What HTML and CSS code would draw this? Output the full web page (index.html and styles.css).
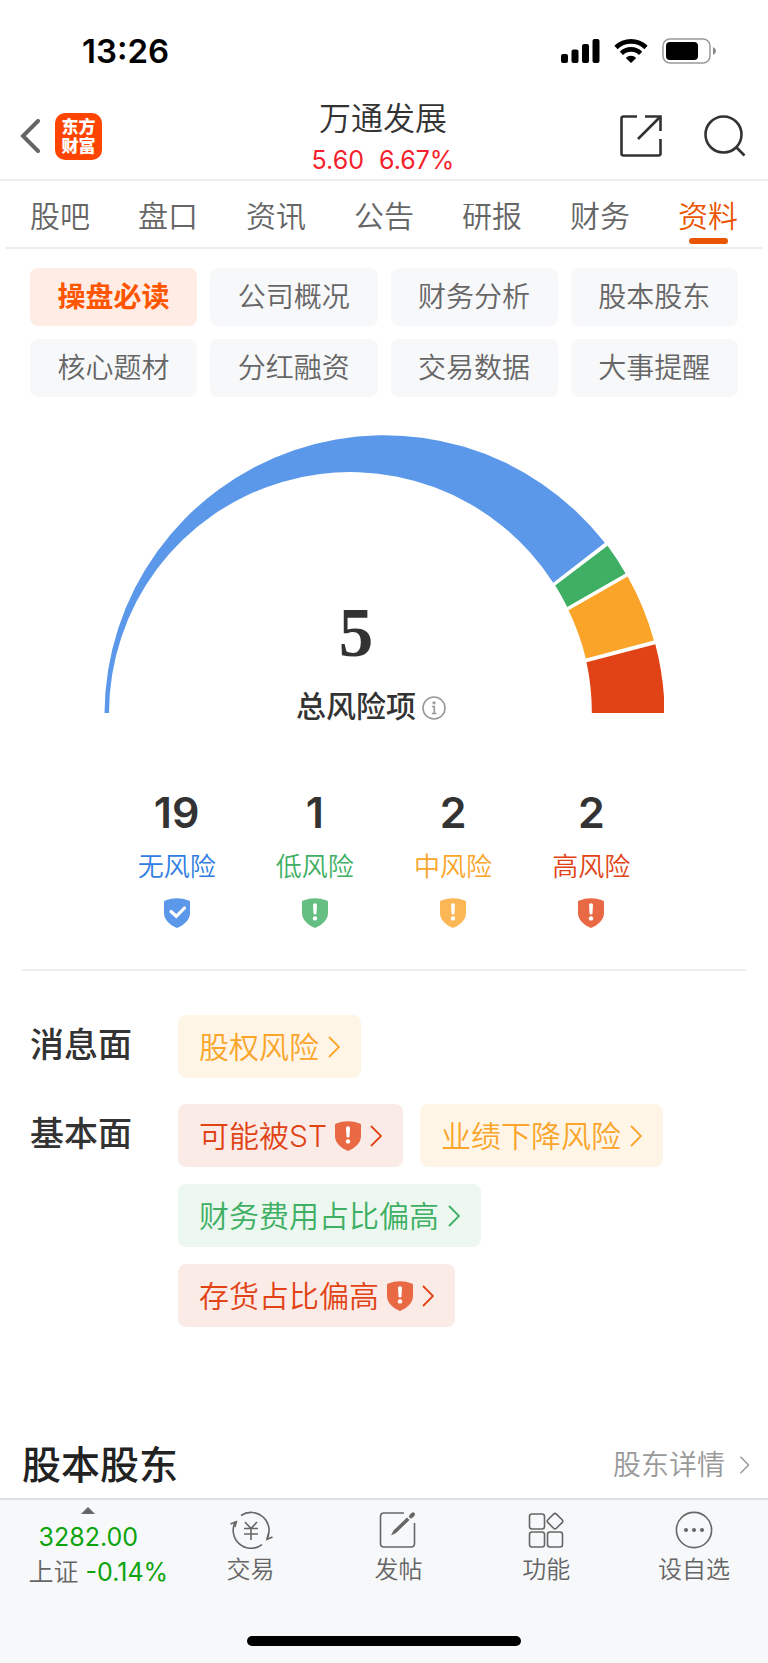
FILE: index.html
```
<!DOCTYPE html>
<html lang="zh-CN">
<head>
    <meta charset="UTF-8">
    <meta name="viewport" content="width=device-width, initial-scale=1.0">
    <title>万通发展 - 资料</title>
    <link rel="stylesheet" href="styles.css">
</head>
<body>
    <!-- Shared icons -->
    <svg class="sprite" width="0" height="0" aria-hidden="true">
        <symbol id="shield" viewBox="0 0 26 30">
            <path d="M0 4 Q0 2.8 1.2 2.4 Q13 -2 24.8 2.4 Q26 2.8 26 4 V15 C26 22 20 27 13 30 C6 27 0 22 0 15 Z" fill="currentColor"/>
        </symbol>
        <symbol id="shield-alert" viewBox="0 0 26 30">
            <use href="#shield"/>
            <path d="M11 7 Q11 5.2 13 5.2 Q15 5.2 15 7 L14.5 15.2 Q14.3 16.6 13 16.6 Q11.7 16.6 11.5 15.2 Z" fill="#fff"/>
            <circle cx="13" cy="20.4" r="2.2" fill="#fff"/>
        </symbol>
        <symbol id="shield-check" viewBox="0 0 26 30">
            <use href="#shield"/>
            <path d="M7 13.5 L12.3 18.3 L20.5 10" fill="none" stroke="#fff" stroke-width="3.2" stroke-linecap="round" stroke-linejoin="miter"/>
        </symbol>
        <symbol id="chevron" viewBox="0 0 12 22">
            <path d="M1 1 L11 11 L1 21" fill="none" stroke="currentColor" stroke-width="1.8"/>
        </symbol>
    </svg>

    <div class="status-bar">
        <time class="clock">13:26</time>
        <div class="status-icons">
            <svg width="39" height="25" viewBox="0 0 39 25" aria-hidden="true">
                <rect x="0" y="15" width="7" height="9" rx="2"/>
                <rect x="10.500" y="10.500" width="7" height="13.500" rx="2"/>
                <rect x="21" y="5" width="7" height="19" rx="2"/>
                <rect x="31.500" y="0" width="7" height="24" rx="2"/>
            </svg>
            <svg width="34" height="25" viewBox="0 0 34 25" aria-hidden="true">
                <path d="M2 8.500 A21.500 21.500 0 0 1 32 8.500" fill="none" stroke="#000" stroke-width="4.600"/>
                <path d="M7.400 14.300 A13.800 13.800 0 0 1 26.600 14.300" fill="none" stroke="#000" stroke-width="4.600"/>
                <path d="M17 24 L11.800 18.900 A7.400 7.400 0 0 1 22.200 18.900 Z"/>
            </svg>
            <svg width="54" height="26" viewBox="0 0 54 26" aria-hidden="true">
                <rect x="1" y="1" width="47" height="24" rx="7" fill="none" stroke="#999" stroke-width="1.500"/>
                <rect x="4" y="4" width="32" height="18" rx="4"/>
                <path d="M51 9 Q54 10.500 54 13 Q54 15.500 51 17 Z" fill="#888"/>
            </svg>
        </div>
    </div>

    <header class="header">
        <div class="header-left">
            <button type="button" class="icon-btn" aria-label="返回">
                <svg width="20" height="34" viewBox="0 0 20 34">
                    <path d="M18 2 L3 17 L18 32" fill="none" stroke="#666" stroke-width="4" stroke-linecap="round"/>
                </svg>
            </button>
            <a href="#" class="logo">东方<br>财富</a>
        </div>
        <div class="header-title">
            <h1>万通发展</h1>
            <p class="price"><span>5.60</span><span>6.67%</span></p>
        </div>
        <div class="header-right">
            <button type="button" class="icon-btn" aria-label="分享">
                <svg width="42" height="42" viewBox="0 0 42 42" fill="none" stroke="#333" stroke-width="2.600">
                    <path d="M17 1.500 H3.500 Q1.500 1.500 1.500 3.500 V38.500 Q1.500 40.500 3.500 40.500 H38.500 Q40.500 40.500 40.500 38.500 V24"/>
                    <path d="M25 1.500 H40.500 V16"/>
                    <path d="M40 2 L18 24"/>
                </svg>
            </button>
            <button type="button" class="icon-btn" aria-label="搜索">
                <svg width="42" height="42" viewBox="0 0 42 42" fill="none" stroke="#333" stroke-width="2.600">
                    <circle cx="19.500" cy="19.500" r="18"/>
                    <path d="M32 32 L40.500 40.500"/>
                </svg>
            </button>
        </div>
    </header>

    <nav class="tabs">
        <a href="#">股吧</a>
        <a href="#">盘口</a>
        <a href="#">资讯</a>
        <a href="#">公告</a>
        <a href="#">研报</a>
        <a href="#">财务</a>
        <a href="#" class="active">资料</a>
    </nav>

    <main>
        <div class="sections">
            <button type="button" class="active">操盘必读</button>
            <button type="button">公司概况</button>
            <button type="button">财务分析</button>
            <button type="button">股本股东</button>
            <button type="button">核心题材</button>
            <button type="button">分红融资</button>
            <button type="button">交易数据</button>
            <button type="button">大事提醒</button>
        </div>

        <div class="gauge">
            <svg viewBox="0 0 560 280" aria-hidden="true">
                <path fill="#5b98ea" d="M0.500 280 A279.500 279.500 0 0 1 500.300 109.700 L448.700 149.700 A241 241 0 0 0 5 280 Z"/>
                <path fill="#3eaf63" d="M503 112.700 A279 279 0 0 1 521 140.300 L462.700 173.700 A241 241 0 0 0 450.700 152.300 Z"/>
                <path fill="#faa52a" d="M523 143.300 A279 279 0 0 1 549.300 207.300 L481.300 225.300 A241 241 0 0 0 464 177 Z"/>
                <path fill="#e14316" d="M550.700 211 A279 279 0 0 1 560 280 H487.300 A241 241 0 0 0 482 229 Z"/>
            </svg>
            <div class="gauge-text">
                <strong class="total">5</strong>
                <div class="total-label">
                    <span>总风险项</span>
                    <button type="button" class="icon-btn info" aria-label="说明">
                        <svg width="24" height="24" viewBox="0 0 24 24">
                            <circle cx="12" cy="12" r="11" fill="none" stroke="#999" stroke-width="1.600"/>
                            <circle cx="12" cy="6.800" r="1.600" fill="#999"/>
                            <path d="M9.800 10.500 H12.300 V17.500 M9.800 17.500 H14.500" fill="none" stroke="#999" stroke-width="1.600"/>
                        </svg>
                    </button>
                </div>
            </div>
        </div>

        <ul class="counts">
            <li class="none">
                <b>19</b>
                <span>无风险</span>
                <svg width="26" height="30"><use href="#shield-check"/></svg>
            </li>
            <li class="low">
                <b>1</b>
                <span>低风险</span>
                <svg width="26" height="30"><use href="#shield-alert"/></svg>
            </li>
            <li class="mid">
                <b>2</b>
                <span>中风险</span>
                <svg width="26" height="30"><use href="#shield-alert"/></svg>
            </li>
            <li class="high">
                <b>2</b>
                <span>高风险</span>
                <svg width="26" height="30"><use href="#shield-alert"/></svg>
            </li>
        </ul>

        <div class="risks">
            <div class="risk-row">
                <h3>消息面</h3>
                <div class="tags">
                    <a href="#" class="tag tag-mid">股权风险<svg class="arrow" width="12" height="22"><use href="#chevron"/></svg></a>
                </div>
            </div>
            <div class="risk-row">
                <h3>基本面</h3>
                <div class="tags">
                    <a href="#" class="tag tag-high">可能被ST<svg class="badge" width="26" height="30"><use href="#shield-alert"/></svg><svg class="arrow" width="12" height="22"><use href="#chevron"/></svg></a>
                    <a href="#" class="tag tag-mid">业绩下降风险<svg class="arrow" width="12" height="22"><use href="#chevron"/></svg></a>
                    <a href="#" class="tag tag-low">财务费用占比偏高<svg class="arrow" width="12" height="22"><use href="#chevron"/></svg></a>
                    <a href="#" class="tag tag-high">存货占比偏高<svg class="badge" width="26" height="30"><use href="#shield-alert"/></svg><svg class="arrow" width="12" height="22"><use href="#chevron"/></svg></a>
                </div>
            </div>
        </div>
    </main>

    <div class="holders">
        <h2>股本股东</h2>
        <a href="#">股东详情<svg width="11" height="18" viewBox="0 0 12 22"><use href="#chevron"/></svg></a>
    </div>

    <footer class="bottom-bar">
        <nav class="bottom-nav">
            <a href="#" class="index">
                <svg width="14" height="7" viewBox="0 0 14 7"><path d="M7 0 L14 7 H0 Z" fill="#666"/></svg>
                <span class="down">3282.00</span>
                <span class="change">上证 <span class="down">-0.14%</span></span>
            </a>
            <a href="#">
                <svg width="44" height="38" viewBox="-1 0 44 38" fill="none" stroke="#666" stroke-width="1.600">
                    <path d="M11 4.500 A18 18 0 0 1 37 27.800"/>
                    <path d="M32 33.700 A18 18 0 0 1 5.500 10.500"/>
                    <path d="M0.500 13 L6.300 10.700 L5 16"/>
                    <path d="M42.500 26 L37 28.300 L38.500 22.500"/>
                    <path d="M15 11 L21 17.500 L27 11 M21 17.500 V29 M14 17.500 H28 M14 23 H28"/>
                </svg>
                <span>交易</span>
            </a>
            <a href="#">
                <svg width="38" height="38" viewBox="0 0 38 38" fill="none" stroke="#666" stroke-width="1.600">
                    <path d="M25 2 H5 Q1.500 2 1.500 5.500 V32.500 Q1.500 36 5 36 H32 Q35.500 36 35.500 32.500 V12"/>
                    <path d="M12 24.500 L14.500 19.500 L28 6.500 L30.500 9 L17 22 Z" fill="#666" stroke="none"/>
                    <path d="M32 5.300 L34 3.300" stroke-width="4" stroke-linecap="round"/>
                </svg>
                <span>发帖</span>
            </a>
            <a href="#">
                <svg width="36" height="38" viewBox="0 0 36 38" fill="none" stroke="#666" stroke-width="1.600">
                    <rect x="1.500" y="3" width="15" height="15" rx="2.500"/>
                    <rect x="1.500" y="21" width="15" height="15" rx="2.500"/>
                    <rect x="19.500" y="21" width="15" height="15" rx="2.500"/>
                    <rect x="21" y="4.200" width="12" height="12" rx="2" transform="rotate(45 27 10.200)"/>
                </svg>
                <span>功能</span>
            </a>
            <a href="#">
                <svg width="38" height="38" viewBox="0 0 38 38">
                    <circle cx="19" cy="19" r="17.600" fill="none" stroke="#666" stroke-width="1.600"/>
                    <circle cx="11" cy="19" r="2" fill="#666"/>
                    <circle cx="19" cy="19" r="2" fill="#666"/>
                    <circle cx="27" cy="19" r="2" fill="#666"/>
                </svg>
                <span>设自选</span>
            </a>
        </nav>
        <div class="home-indicator"></div>
    </footer>
</body>
</html>
```
FILE: styles.css
```
* {
    box-sizing: border-box;
}
body {
    margin: 0;
    min-height: 100vh;
    display: flex;
    flex-direction: column;
    font-family: Inter, "Noto Sans CJK SC", sans-serif;
    font-weight: 350;
    color: #333;
    background-color: #fff;
}
h1, h2, h3, p, ul {
    margin: 0;
    padding: 0;
}
a {
    color: inherit;
    text-decoration: none;
}
button {
    font: inherit;
    color: inherit;
    border: none;
    background: none;
    padding: 0;
    cursor: pointer;
}
svg {
    display: block;
    flex-shrink: 0;
}
.sprite {
    position: absolute;
}

/* Status bar */
.status-bar {
    display: flex;
    justify-content: space-between;
    align-items: center;
    padding: 32px 52px 0 82px;
    height: 70px;
}
.clock {
    font-size: 33px;
    line-height: 38px;
    font-weight: 600;
    color: #000;
}
.status-icons {
    display: flex;
    align-items: center;
    gap: 14px;
}

/* Header */
.header {
    display: grid;
    grid-template-columns: 1fr auto 1fr;
    align-items: center;
    padding: 30px 22px 3px 20px;
    border-bottom: 2px solid #eee;
}
.header-left,
.header-right {
    display: flex;
    align-items: center;
    padding-bottom: 4px;
}
.header-left {
    gap: 15px;
}
.header-right {
    justify-content: flex-end;
    gap: 42px;
}
.logo {
    width: 47px;
    height: 47px;
    padding-top: 5px;
    border-radius: 10px;
    background-color: #ff4400;
    color: #fff;
    font-size: 17px;
    line-height: 19px;
    font-weight: 900;
    text-align: center;
}
.header-title {
    text-align: center;
}
.header-title h1 {
    margin-bottom: 6px;
    font-size: 32px;
    line-height: 38px;
    font-weight: inherit;
}
.price {
    display: flex;
    justify-content: center;
    gap: 15px;
    font-size: 25px;
    line-height: 32px;
    font-weight: 400;
    color: #f5222d;
}

/* Tabs */
.tabs {
    display: flex;
    margin: 0 6px;
    border-bottom: 2px solid #eee;
}
.tabs a {
    flex: 1;
    display: flex;
    flex-direction: column;
    align-items: center;
    height: 66px;
    padding-top: 14px;
    font-size: 30px;
    line-height: 42px;
    color: #666;
}
.tabs .active {
    color: #ea5504;
}
.tabs .active::after {
    content: "";
    width: 39px;
    height: 6px;
    margin-top: 1px;
    border-radius: 3px;
    background-color: #ea5504;
}

/* Section buttons */
.sections {
    display: grid;
    grid-template-columns: repeat(4, 1fr);
    gap: 13px;
    padding: 19px 30px 0;
}
.sections button {
    height: 58px;
    border-radius: 8px;
    background-color: #f7f8fa;
    font-size: 28px;
    line-height: 40px;
    color: #666;
}
.sections .active {
    background-color: #ffece4;
    color: #ff5500;
    font-weight: 700;
}

/* Risk gauge */
.gauge {
    position: relative;
    width: 73%;
    margin: 36px auto 0;
}
.gauge-text {
    position: absolute;
    left: 0;
    right: 10%;
    bottom: -28px;
    display: flex;
    flex-direction: column;
    align-items: center;
}
.total {
    font-family: "Liberation Serif", serif;
    font-size: 69px;
    line-height: 76px;
    font-weight: 700;
}
.total-label {
    display: flex;
    align-items: center;
    gap: 6px;
    margin-right: -30px;
    font-size: 30px;
    line-height: 70px;
    font-weight: 500;
}
.info {
    padding-top: 4px;
}

/* Risk counts */
.counts {
    display: flex;
    width: 72%;
    margin: 71px auto 0;
    list-style: none;
}
.counts li {
    flex: 1;
    display: flex;
    flex-direction: column;
    align-items: center;
}
.counts b {
    font-size: 43px;
    line-height: 56px;
    font-weight: 600;
    color: #333;
}
.counts span {
    margin: 8px 0 12px;
    font-size: 26px;
    line-height: 38px;
}
.none {
    color: #5b98ea;
}
.none span {
    color: #2f7de1;
}
.low {
    color: #65be82;
}
.low span {
    color: #3eaf63;
}
.mid {
    color: #fbb756;
}
.mid span {
    color: #faa52a;
}
.high {
    color: #e96945;
}
.high span {
    color: #e14316;
}

/* Risk tags */
.risks {
    display: flex;
    flex-direction: column;
    gap: 26px;
    margin: 41px 22px 0;
    padding: 44px 8px 0;
    border-top: 2px solid #eee;
}
.risk-row {
    display: flex;
}
.risk-row h3 {
    width: 148px;
    flex-shrink: 0;
    font-size: 34px;
    line-height: 60px;
    font-weight: 500;
}
.tags {
    display: flex;
    flex-wrap: wrap;
    gap: 17px;
}
.tag {
    display: flex;
    align-items: center;
    height: 63px;
    padding: 0 21px;
    border-radius: 8px;
    font-size: 30px;
    line-height: 42px;
}
.badge {
    margin-left: 8px;
    color: #e96945;
}
.arrow {
    margin-left: 9px;
}
.tag-mid {
    background-color: #fef5e7;
    color: #faa52a;
}
.tag-high {
    background-color: #fbebe7;
    color: #e14316;
}
.tag-low {
    background-color: #ebf7ef;
    color: #3eaf63;
}

/* Shareholders */
.holders {
    display: flex;
    justify-content: space-between;
    align-items: center;
    margin-top: auto;
    padding: 0 18px 3px 22px;
}
.holders h2 {
    font-size: 39px;
    line-height: 60px;
    font-weight: 500;
    color: #222;
}
.holders a {
    display: flex;
    align-items: center;
    gap: 14px;
    font-size: 28px;
    line-height: 40px;
    color: #999;
}

/* Bottom bar */
.bottom-bar {
    height: 165px;
    padding-top: 7px;
    display: flex;
    flex-direction: column;
    align-items: center;
    justify-content: space-between;
    border-top: 2px solid #dfe0e4;
    background-color: #f7f8fa;
}
.bottom-nav {
    display: flex;
    width: 100%;
}
.bottom-nav a {
    flex: 1;
    display: flex;
    flex-direction: column;
    align-items: center;
    gap: 5px;
    padding-top: 4px;
    font-size: 24px;
    line-height: 32px;
    color: #666;
}
.bottom-nav .index {
    flex: 0 0 23%;
    gap: 0;
    padding-top: 0;
    font-size: 25px;
    line-height: 35px;
}
.index svg {
    margin-bottom: 6px;
}
.change {
    padding-left: 20px;
    white-space: nowrap;
}
.down {
    color: #0da30d;
    font-weight: 400;
}
.home-indicator {
    width: 274px;
    height: 10px;
    margin-bottom: 17px;
    border-radius: 5px;
    background-color: #000;
}
```
